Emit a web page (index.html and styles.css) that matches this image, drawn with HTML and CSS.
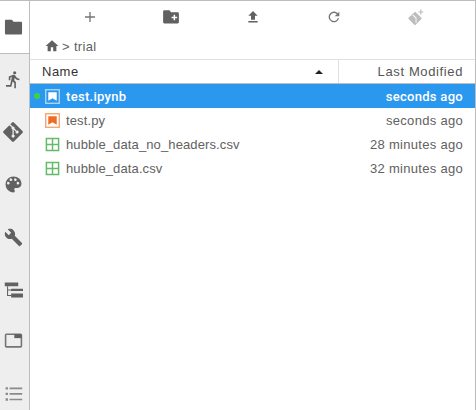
FILE: index.html
```html
<!DOCTYPE html>
<html lang="en">
<head>
<meta charset="utf-8">
<title>File browser</title>
<link rel="stylesheet" href="styles.css">
</head>
<body>
<div class="app">
  <nav class="sidebar">
    <div class="tab tab-active">
      <svg class="tab-icon" viewBox="0 0 24 24"><path fill="#616161" d="M2.500 3.500h7.500l2 2.600h9.200c.9 0 1.600.7 1.600 1.600v12.700c0 .9-.7 1.600-1.600 1.600H2.800c-.9 0-1.600-.7-1.600-1.600V4.800c0-.7.600-1.300 1.300-1.300z"/></svg>
    </div>
    <div class="tab">
      <svg class="tab-icon" viewBox="0 0 24 24"><path fill="#616161" d="M13.500 5.500a2 2 0 1 0 0-4 2 2 0 0 0 0 4zM9.900 8.900 7.800 19H2.500v2h6.800l1.600-6.500 2.100 2v6.500h2v-8l-2.100-2 .6-3A7.300 7.300 0 0 0 19.500 13v-2c-1.900 0-3.500-1-4.300-2.400l-1-1.600c-.4-.6-1-1-1.700-1-.3 0-.5.1-.8.1L6 8.300V13h2V9.600l1.900-.7z"/></svg>
    </div>
    <div class="tab">
      <svg class="tab-icon tab-icon-git" viewBox="0 0 24 24"><path fill="#616161" d="M23.300 10.900 13.100.7a1.500 1.500 0 0 0-2.200 0L8.800 2.800l2.700 2.700a1.800 1.800 0 0 1 2.300 2.300l2.600 2.600a1.800 1.800 0 1 1-1.100 1l-2.400-2.400v6.300a1.800 1.800 0 1 1-1.500 0V8.900a1.800 1.800 0 0 1-1-2.400L7.700 3.900.7 10.900a1.500 1.500 0 0 0 0 2.200l10.200 10.200a1.500 1.500 0 0 0 2.200 0l10.200-10.200a1.500 1.500 0 0 0 0-2.200z"/></svg>
    </div>
    <div class="tab">
      <svg class="tab-icon" viewBox="0 0 24 24"><path fill="#616161" d="M12 2C6.500 2 2 6.500 2 12s4.500 10 10 10c.9 0 1.700-.7 1.700-1.700 0-.4-.2-.8-.4-1.100-.3-.3-.4-.7-.4-1.100 0-.9.7-1.700 1.700-1.700h2c3.100 0 5.500-2.500 5.500-5.500C22 6 17.500 2 12 2zM5.900 12a1.700 1.700 0 1 1 0-3.300 1.700 1.700 0 0 1 0 3.300zm3.300-4.400a1.700 1.700 0 1 1 0-3.300 1.700 1.700 0 0 1 0 3.300zm5.600 0a1.700 1.700 0 1 1 0-3.300 1.700 1.700 0 0 1 0 3.300zm3.300 4.400a1.700 1.700 0 1 1 0-3.300 1.700 1.700 0 0 1 0 3.300z"/></svg>
    </div>
    <div class="tab">
      <svg class="tab-icon" viewBox="0 0 24 24"><path fill="#616161" d="m22.700 19-9.100-9.100c.9-2.300.4-5-1.500-6.900-2-2-5-2.400-7.400-1.300L9 6 6 9 1.600 4.700C.4 7.100.9 10.100 2.900 12.100c1.900 1.900 4.600 2.400 6.900 1.500l9.100 9.100c.4.400 1 .4 1.400 0l2.300-2.300c.5-.4.5-1.100.1-1.400z"/></svg>
    </div>
    <div class="tab">
      <svg class="tab-icon" viewBox="0 0 24 24"><path fill="#616161" d="M1 3h17v5H1zM9 11h15v3H9zM9 17h15v5H9z"/><path fill="none" stroke="#616161" stroke-width="1.300" d="M4.500 8v11.500H9M4.500 12.500H9"/></svg>
    </div>
    <div class="tab tab-low">
      <svg class="tab-icon" viewBox="0 0 24 24"><path fill="none" stroke="#757575" stroke-width="2" d="M3 4h18a1 1 0 0 1 1 1v14a1 1 0 0 1-1 1H3a1 1 0 0 1-1-1V5a1 1 0 0 1 1-1z"/><path fill="#616161" d="M13 4h9v5h-9z"/></svg>
    </div>
    <div class="tab tab-low">
      <svg class="tab-icon" viewBox="0 0 24 24"><path fill="#8a8a8a" d="M2 4h3v3H2zM7 4.500h16v2H7zM2 11h3v3H2zM7 11.500h16v2H7zM2 18h3v3H2zM7 18.500h16v2H7z"/></svg>
    </div>
  </nav>
  <main class="browser">
    <div class="toolbar">
      <button class="tool"><svg class="tool-icon" viewBox="0 0 24 24"><path fill="#757575" d="M19.500 13h-6.500v6.500h-2V13H4.500v-2H11V4.500h2V11h6.500z"/></svg></button>
      <button class="tool"><svg class="tool-icon tool-wide" viewBox="0 0 24 24"><path fill="#616161" d="M3 3h7l2 2.500h9a1.500 1.500 0 0 1 1.500 1.500v12A1.500 1.500 0 0 1 21 20.500H3A1.500 1.500 0 0 1 1.500 19V4.500A1.500 1.500 0 0 1 3 3z"/><path fill="#fff" d="M15.500 9h2v2.700H20.200v2h-2.700v2.700h-2v-2.700h-2.700v-2h2.700z"/></svg></button>
      <button class="tool"><svg class="tool-icon" viewBox="0 0 24 24"><path fill="#616161" d="M9 16h6v-6h4l-7-7-7 7h4zM5 18h14v2.200H5z"/></svg></button>
      <button class="tool"><svg class="tool-icon" viewBox="0 0 24 24"><path fill="#757575" d="M17.700 6.300A8 8 0 1 0 19.700 14h-2.100a6 6 0 1 1-1.400-6.200L13 11h7V4z"/></svg></button>
      <button class="tool"><svg class="tool-icon tool-git" viewBox="0 0 24 24"><path fill="#bdbdbd" d="M20.500 13 13 5.500a1.300 1.300 0 0 0-1.800 0L3.500 13a1.300 1.300 0 0 0 0 1.800l7.500 7.500a1.300 1.300 0 0 0 1.800 0l7.700-7.500a1.300 1.300 0 0 0 0-1.800z"/><path fill="#fff" d="M9.500 8.500 14 13v6.500h-1.200v-6L8.500 9.500z"/><path fill="#bdbdbd" d="M19 2h1.500v2.500H23V6h-2.500v2.500H19V6h-2.500V4.500H19z"/></svg></button>
    </div>
    <div class="crumbs">
      <svg class="home" viewBox="0 0 24 24"><path fill="#616161" d="M10 21v-7h4v7h5.500v-9H23L12 2 1 12h3.500v9z"/></svg>
      <span class="crumb-text">&gt; trial</span>
    </div>
    <div class="head">
      <div class="head-name"><span>Name</span><span class="sort"></span></div>
      <div class="head-modified">Last Modified</div>
    </div>
    <ul class="files">
      <li class="file file-selected">
        <span class="dot"></span>
        <svg class="file-icon" viewBox="0 0 16 16"><rect x=".75" y=".75" width="14.500" height="14.500" fill="none" stroke="#a9d3f5" stroke-width="1.500"/><path fill="#fff" d="M3.500 3.500h9v9L8 9.800 3.500 12.500z"/></svg>
        <span class="file-name">test.ipynb</span>
        <span class="file-time">seconds ago</span>
      </li>
      <li class="file">
        <svg class="file-icon" viewBox="0 0 16 16"><rect x=".75" y=".75" width="14.500" height="14.500" fill="none" stroke="#f5a875" stroke-width="1.500"/><path fill="#ef6c22" d="M3.500 3.500h9v9L8 9.800 3.500 12.500z"/></svg>
        <span class="file-name">test.py</span>
        <span class="file-time">seconds ago</span>
      </li>
      <li class="file">
        <svg class="file-icon" viewBox="0 0 16 16"><path fill="none" stroke="#66bb6a" stroke-width="1.600" d="M1.500 1.500h13v13h-13zM8 1.500v13M1.500 8h13"/></svg>
        <span class="file-name">hubble_data_no_headers.csv</span>
        <span class="file-time">28 minutes ago</span>
      </li>
      <li class="file">
        <svg class="file-icon" viewBox="0 0 16 16"><path fill="none" stroke="#66bb6a" stroke-width="1.600" d="M1.500 1.500h13v13h-13zM8 1.500v13M1.500 8h13"/></svg>
        <span class="file-name">hubble_data.csv</span>
        <span class="file-time">32 minutes ago</span>
      </li>
    </ul>
  </main>
</div>
</body>
</html>
```
FILE: styles.css
```css
* { box-sizing: border-box; }
html, body { margin: 0; height: 100%; background: #fff; overflow: hidden; }
body { font-family: "Liberation Sans", Arial, sans-serif; font-size: 13px; color: #616161; }
.app { display: flex; height: 410px; border-top: 1px solid #bdbdbd; border-right: 1px solid #bdbdbd; }
.sidebar { flex: 0 0 30px; display: flex; flex-direction: column; background: #eeeeee; border-right: 1px solid #bdbdbd; overflow: hidden; }
.tab { flex: 0 0 52.5px; display: flex; align-items: center; justify-content: center; padding-right: 3px; }
.tab-active { background: #fff; border-bottom: 1px solid #bdbdbd; margin-right: -1px; padding-right: 4px; }
.tab-low { padding-bottom: 3px; }
.tab-icon { width: 19px; height: 19px; }
.tab-icon-git { width: 20px; height: 20px; }
.browser { flex: 1; min-width: 0; display: flex; flex-direction: column; }
.toolbar { display: flex; height: 32px; padding: 0 19px; }
.tool { flex: 1; display: flex; align-items: center; justify-content: center; padding: 0; border: 0; background: none; }
.tool-icon { width: 16px; height: 16px; }
.tool-wide { width: 18px; height: 18px; }
.tool-git { width: 18px; height: 18px; }
.crumbs { display: flex; align-items: center; height: 26px; padding-left: 15px; gap: 3px; letter-spacing: .35px; }
.home { width: 14px; height: 14px; }
.head { display: flex; height: 25px; border-top: 1px solid #e0e0e0; border-bottom: 1px solid #bdbdbd; color: #333; letter-spacing: .5px; }
.head-name { flex: 1; display: flex; align-items: center; justify-content: space-between; padding: 0 15px 0 12px; }
.sort { width: 0; height: 0; border-left: 4px solid transparent; border-right: 4px solid transparent; border-bottom: 4px solid #222; }
.head-modified { flex: 0 0 137px; display: flex; align-items: center; justify-content: flex-end; padding-right: 12px; border-left: 1px solid #e0e0e0; color: #555; letter-spacing: .62px; }
.files { list-style: none; margin: 0; padding: 0; }
.file { position: relative; display: flex; align-items: center; height: 24px; padding: 0 12px 0 15px; }
.file-selected { background: #2b98f0; color: #fff; font-family: Roboto, "Liberation Sans", sans-serif; font-weight: 500; }
.file-selected .file-name { letter-spacing: .3px; }
.file-selected .file-time { letter-spacing: .3px; }
.dot { position: absolute; left: 4px; top: 9px; width: 6px; height: 6px; border-radius: 50%; background: #3fd13f; }
.file-icon { width: 15px; height: 15px; margin-right: 6px; flex: none; }
.file-name { flex: 1; letter-spacing: .12px; }
.file-time { flex: none; letter-spacing: .3px; }
```
